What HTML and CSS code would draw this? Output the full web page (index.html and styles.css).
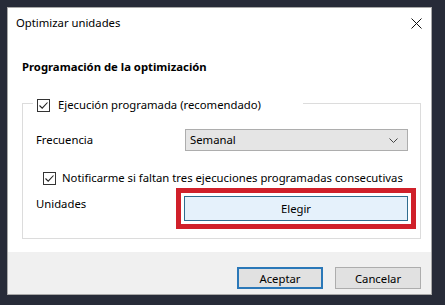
FILE: index.html
```html
<!DOCTYPE html>
<html lang="es">
<head>
    <meta charset="UTF-8">
    <meta name="viewport" content="width=device-width, initial-scale=1.0">
    <title>Optimizar unidades</title>
    <link rel="stylesheet" href="styles.css">
</head>
<body>
    <div class="dialog">
        <div class="title-bar">
            <span class="title">Optimizar unidades</span>
            <button class="close-btn" aria-label="Cerrar">
                <svg width="11" height="11" viewBox="0 0 11 11">
                    <path d="M0.5 0.5 L10.5 10.5 M10.5 0.5 L0.5 10.5" stroke="#111" stroke-width="1" fill="none"/>
                </svg>
            </button>
        </div>

        <div class="content">
            <h2 class="section-title">Programación de la optimización</h2>

            <div class="group">
                <div class="group-legend">
                    <span class="check">
                        <svg width="11" height="11" viewBox="0 0 11 11">
                            <path d="M1.5 5.5 L4.2 8.2 L9.5 2.5" stroke="#222" stroke-width="1.1" fill="none"/>
                        </svg>
                    </span>
                    <span>Ejecución programada (recomendado)</span>
                </div>

                <div class="row row-freq">
                    <span class="label">Frecuencia</span>
                    <div class="select">
                        <span>Semanal</span>
                        <svg width="9" height="5" viewBox="0 0 9 5">
                            <path d="M0.5 0.5 L4.5 4.5 L8.5 0.5" stroke="#444" stroke-width="1" fill="none"/>
                        </svg>
                    </div>
                </div>

                <div class="row row-notify">
                    <span class="check">
                        <svg width="11" height="11" viewBox="0 0 11 11">
                            <path d="M1.5 5.5 L4.2 8.2 L9.5 2.5" stroke="#222" stroke-width="1.1" fill="none"/>
                        </svg>
                    </span>
                    <span>Notificarme si faltan tres ejecuciones programadas consecutivas</span>
                </div>

                <div class="row row-drives">
                    <span class="label">Unidades</span>
                    <div class="highlight">
                        <button class="btn btn-choose">Elegir</button>
                    </div>
                </div>
            </div>
        </div>

        <div class="footer">
            <button class="btn btn-default">Aceptar</button>
            <button class="btn">Cancelar</button>
        </div>
    </div>
</body>
</html>
```

FILE: styles.css
```css
* {
    box-sizing: border-box;
}

body {
    margin: 0;
    background-color: #272b38;
    font-family: "Noto Sans", "Liberation Sans", sans-serif;
    font-size: 11.3px;
    line-height: 16px;
    color: #000;
}

.dialog {
    margin: 7px 0 0 7px;
    width: 425px;
    height: 288px;
    background-color: #fff;
    border: 1px solid #a8a8a8;
    display: flex;
    flex-direction: column;
}

.title-bar {
    height: 30px;
    flex-shrink: 0;
    display: flex;
    align-items: center;
    justify-content: space-between;
    padding: 0 9px 0 8px;
}

.close-btn {
    background: none;
    border: none;
    padding: 0;
    width: 11px;
    height: 11px;
    display: flex;
}

.content {
    flex: 1;
    padding: 0 10px 0 14px;
}

.section-title {
    font-size: 11.3px;
    font-weight: bold;
    line-height: 16px;
    margin: 21px 0 28px 0;
}

.group {
    border: 1px solid #dcdcdc;
    height: 136px;
    padding: 0 12px 0 13px;
}

.group-legend {
    display: flex;
    align-items: center;
    gap: 8px;
    width: 270px;
    height: 16px;
    margin: -7px 0 0 -3px;
    padding-left: 4px;
    background-color: #fff;
}

.check {
    width: 13px;
    height: 13px;
    border: 1px solid #333;
    background-color: #fff;
    display: inline-flex;
    flex-shrink: 0;
}

.row {
    display: flex;
    align-items: center;
}

.label {
    width: 149px;
    flex-shrink: 0;
}

.row-freq {
    height: 22px;
    margin-top: 16px;
}

.select {
    flex: 1;
    height: 22px;
    background-color: #e5e5e5;
    border: 1px solid #adadad;
    display: flex;
    align-items: center;
    justify-content: space-between;
    padding: 0 9px 0 4px;
}

.row-notify {
    height: 16px;
    margin: 19px 0 0 7px;
    gap: 6px;
}

.row-drives {
    margin-top: 2px;
    align-items: flex-start;
}

.row-drives .label {
    margin-top: 8px;
}

.highlight {
    flex: 1;
    margin: 0 -8px 0 -9px;
    border: 5px solid #d0202a;
    padding: 3px;
}

.btn {
    font-family: inherit;
    font-size: 11.3px;
    color: #000;
    background-color: #e1e1e1;
    border: 1px solid #adadad;
    height: 22px;
    width: 86px;
    padding: 0;
}

.btn-choose {
    width: 100%;
    height: 25px;
    background-color: #e5f1fb;
    border-color: #2f6d8f;
}

.btn-default {
    border: 2px solid #2b78b8;
}

.footer {
    height: 42px;
    flex-shrink: 0;
    background-color: #f0f0f0;
    display: flex;
    justify-content: flex-end;
    align-items: flex-start;
    gap: 12px;
    padding: 15px 10px 0 0;
}
```
